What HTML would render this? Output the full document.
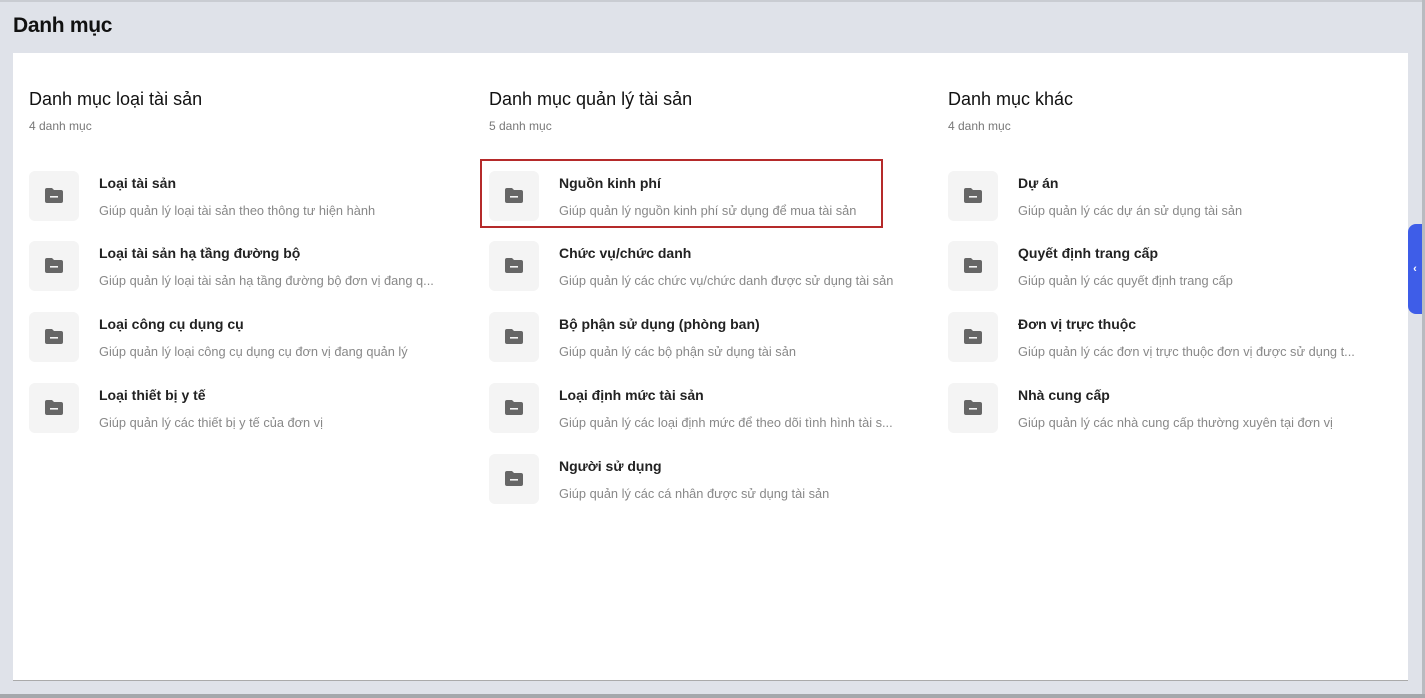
<!DOCTYPE html>
<html><head><meta charset="utf-8"><style>
*{margin:0;padding:0;box-sizing:border-box}
body{width:1425px;height:698px;background:#dfe2e9;font-family:"Liberation Sans",Arial,sans-serif;position:relative;overflow:hidden}
.top{position:absolute;left:0;top:0;width:1425px;height:2px;background:#c9ccd2}
.bottom{position:absolute;left:0;top:694px;width:1425px;height:4px;background:#a5a8ac}
.rb{position:absolute;left:1422px;top:0;width:3px;height:698px;background:#b8bbc0}
h1{position:absolute;left:13px;top:14px;font-size:21px;font-weight:bold;color:#111;letter-spacing:-0.3px}
.panel{position:absolute;left:13px;top:53px;width:1395px;height:628px;background:#fff;border-bottom:1px solid #aaa}
.col{position:absolute;top:36px}
.col h2{font-size:18px;font-weight:normal;color:#111;margin-top:0}
.col .cnt{font-size:12px;color:#777;margin-top:9px}
.item{position:absolute;left:0;height:50px;width:420px}
.ic{position:absolute;left:0;top:0;width:50px;height:50px;background:#f4f4f4;border-radius:6px}
.ic svg{position:absolute;left:15px;top:16px}
.t{position:absolute;left:70px;top:4px;font-size:14px;font-weight:bold;color:#222;white-space:nowrap}
.d{position:absolute;left:70px;top:32px;font-size:12.8px;color:#888;white-space:nowrap}
.hl{position:absolute;left:467px;top:106px;width:403px;height:69px;border:2px solid #b52a2a}
.tab{position:absolute;left:1408px;top:224px;width:14px;height:90px;background:#3e5de8;border-radius:8px 0 0 8px;color:#fff;font-size:11px;line-height:90px;text-align:center;font-weight:bold}
</style></head><body>
<div class="top"></div><div class="rb"></div><div class="bottom"></div>
<h1>Danh mục</h1>
<div class="panel">
<div class="col" style="left:16px">
<h2>Danh mục loại tài sản</h2><div class="cnt">4 danh mục</div>
</div>
<div class="col" style="left:476px">
<h2>Danh mục quản lý tài sản</h2><div class="cnt">5 danh mục</div>
</div>
<div class="col" style="left:935px">
<h2>Danh mục khác</h2><div class="cnt">4 danh mục</div>
</div>
<div class="hl"></div>
</div>
<div class="tab">‹</div>
<div style="position:absolute;left:0;top:0">
<div class="item" style="left:29px;top:171px"><div class="ic"><svg width="20" height="18"><path d="M1 3a2 2 0 0 1 2-2h5l2 2h7a2 2 0 0 1 2 2v9a2 2 0 0 1-2 2H3a2 2 0 0 1-2-2z" fill="#666"/><rect x="6" y="9" width="8" height="1.6" fill="#f4f4f4"/></svg></div><div class="t">Loại tài sản</div><div class="d">Giúp quản lý loại tài sản theo thông tư hiện hành</div></div>
<div class="item" style="left:29px;top:241px"><div class="ic"><svg width="20" height="18"><path d="M1 3a2 2 0 0 1 2-2h5l2 2h7a2 2 0 0 1 2 2v9a2 2 0 0 1-2 2H3a2 2 0 0 1-2-2z" fill="#666"/><rect x="6" y="9" width="8" height="1.6" fill="#f4f4f4"/></svg></div><div class="t">Loại tài sản hạ tầng đường bộ</div><div class="d">Giúp quản lý loại tài sản hạ tầng đường bộ đơn vị đang q...</div></div>
<div class="item" style="left:29px;top:312px"><div class="ic"><svg width="20" height="18"><path d="M1 3a2 2 0 0 1 2-2h5l2 2h7a2 2 0 0 1 2 2v9a2 2 0 0 1-2 2H3a2 2 0 0 1-2-2z" fill="#666"/><rect x="6" y="9" width="8" height="1.6" fill="#f4f4f4"/></svg></div><div class="t">Loại công cụ dụng cụ</div><div class="d">Giúp quản lý loại công cụ dụng cụ đơn vị đang quản lý</div></div>
<div class="item" style="left:29px;top:383px"><div class="ic"><svg width="20" height="18"><path d="M1 3a2 2 0 0 1 2-2h5l2 2h7a2 2 0 0 1 2 2v9a2 2 0 0 1-2 2H3a2 2 0 0 1-2-2z" fill="#666"/><rect x="6" y="9" width="8" height="1.6" fill="#f4f4f4"/></svg></div><div class="t">Loại thiết bị y tế</div><div class="d">Giúp quản lý các thiết bị y tế của đơn vị</div></div>
<div class="item" style="left:489px;top:171px"><div class="ic"><svg width="20" height="18"><path d="M1 3a2 2 0 0 1 2-2h5l2 2h7a2 2 0 0 1 2 2v9a2 2 0 0 1-2 2H3a2 2 0 0 1-2-2z" fill="#666"/><rect x="6" y="9" width="8" height="1.6" fill="#f4f4f4"/></svg></div><div class="t">Nguồn kinh phí</div><div class="d">Giúp quản lý nguồn kinh phí sử dụng để mua tài sản</div></div>
<div class="item" style="left:489px;top:241px"><div class="ic"><svg width="20" height="18"><path d="M1 3a2 2 0 0 1 2-2h5l2 2h7a2 2 0 0 1 2 2v9a2 2 0 0 1-2 2H3a2 2 0 0 1-2-2z" fill="#666"/><rect x="6" y="9" width="8" height="1.6" fill="#f4f4f4"/></svg></div><div class="t">Chức vụ/chức danh</div><div class="d">Giúp quản lý các chức vụ/chức danh được sử dụng tài sản</div></div>
<div class="item" style="left:489px;top:312px"><div class="ic"><svg width="20" height="18"><path d="M1 3a2 2 0 0 1 2-2h5l2 2h7a2 2 0 0 1 2 2v9a2 2 0 0 1-2 2H3a2 2 0 0 1-2-2z" fill="#666"/><rect x="6" y="9" width="8" height="1.6" fill="#f4f4f4"/></svg></div><div class="t">Bộ phận sử dụng (phòng ban)</div><div class="d">Giúp quản lý các bộ phận sử dụng tài sản</div></div>
<div class="item" style="left:489px;top:383px"><div class="ic"><svg width="20" height="18"><path d="M1 3a2 2 0 0 1 2-2h5l2 2h7a2 2 0 0 1 2 2v9a2 2 0 0 1-2 2H3a2 2 0 0 1-2-2z" fill="#666"/><rect x="6" y="9" width="8" height="1.6" fill="#f4f4f4"/></svg></div><div class="t">Loại định mức tài sản</div><div class="d">Giúp quản lý các loại định mức để theo dõi tình hình tài s...</div></div>
<div class="item" style="left:489px;top:454px"><div class="ic"><svg width="20" height="18"><path d="M1 3a2 2 0 0 1 2-2h5l2 2h7a2 2 0 0 1 2 2v9a2 2 0 0 1-2 2H3a2 2 0 0 1-2-2z" fill="#666"/><rect x="6" y="9" width="8" height="1.6" fill="#f4f4f4"/></svg></div><div class="t">Người sử dụng</div><div class="d">Giúp quản lý các cá nhân được sử dụng tài sản</div></div>
<div class="item" style="left:948px;top:171px"><div class="ic"><svg width="20" height="18"><path d="M1 3a2 2 0 0 1 2-2h5l2 2h7a2 2 0 0 1 2 2v9a2 2 0 0 1-2 2H3a2 2 0 0 1-2-2z" fill="#666"/><rect x="6" y="9" width="8" height="1.6" fill="#f4f4f4"/></svg></div><div class="t">Dự án</div><div class="d">Giúp quản lý các dự án sử dụng tài sản</div></div>
<div class="item" style="left:948px;top:241px"><div class="ic"><svg width="20" height="18"><path d="M1 3a2 2 0 0 1 2-2h5l2 2h7a2 2 0 0 1 2 2v9a2 2 0 0 1-2 2H3a2 2 0 0 1-2-2z" fill="#666"/><rect x="6" y="9" width="8" height="1.6" fill="#f4f4f4"/></svg></div><div class="t">Quyết định trang cấp</div><div class="d">Giúp quản lý các quyết định trang cấp</div></div>
<div class="item" style="left:948px;top:312px"><div class="ic"><svg width="20" height="18"><path d="M1 3a2 2 0 0 1 2-2h5l2 2h7a2 2 0 0 1 2 2v9a2 2 0 0 1-2 2H3a2 2 0 0 1-2-2z" fill="#666"/><rect x="6" y="9" width="8" height="1.6" fill="#f4f4f4"/></svg></div><div class="t">Đơn vị trực thuộc</div><div class="d">Giúp quản lý các đơn vị trực thuộc đơn vị được sử dụng t...</div></div>
<div class="item" style="left:948px;top:383px"><div class="ic"><svg width="20" height="18"><path d="M1 3a2 2 0 0 1 2-2h5l2 2h7a2 2 0 0 1 2 2v9a2 2 0 0 1-2 2H3a2 2 0 0 1-2-2z" fill="#666"/><rect x="6" y="9" width="8" height="1.6" fill="#f4f4f4"/></svg></div><div class="t">Nhà cung cấp</div><div class="d">Giúp quản lý các nhà cung cấp thường xuyên tại đơn vị</div></div>
</div>
</body></html>
